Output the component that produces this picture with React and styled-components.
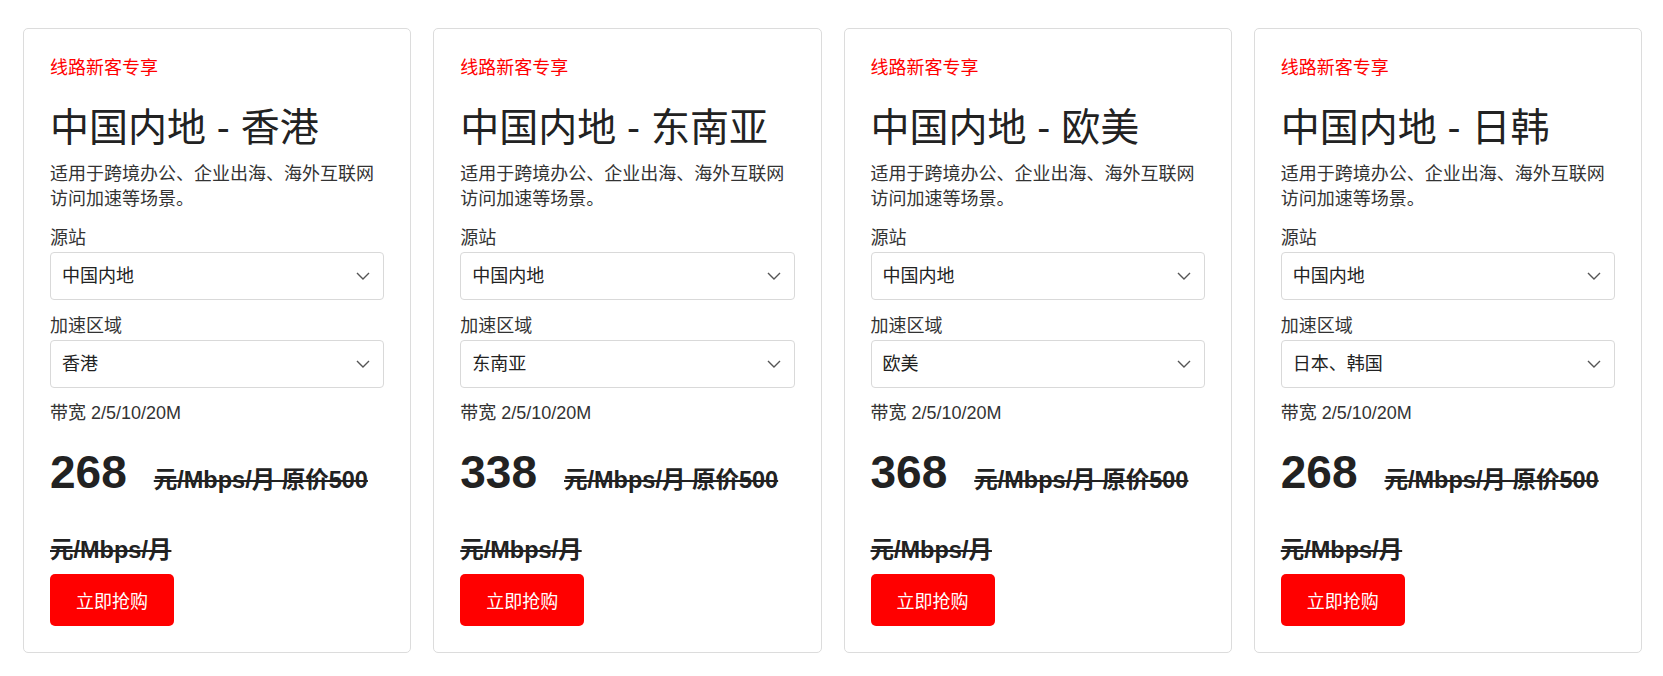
import React from "react";
import styled, { createGlobalStyle } from "styled-components";

const plans = [
  { region: "香港", area: "香港", price: 268 },
  { region: "东南亚", area: "东南亚", price: 338 },
  { region: "欧美", area: "欧美", price: 368 },
  { region: "日韩", area: "日本、韩国", price: 268 },
];

export default function App() {
  return (
    <>
      <GlobalStyle />
      <StyledGrid>
        {plans.map(({ region, area, price }) => (
          <StyledCard key={region}>
            <StyledTag>线路新客专享</StyledTag>
            <StyledTitle>中国内地 - {region}</StyledTitle>
            <StyledDesc>适用于跨境办公、企业出海、海外互联网访问加速等场景。</StyledDesc>
            <Field label="源站" value="中国内地" />
            <Field label="加速区域" value={area} />
            <StyledBandwidth>带宽 2/5/10/20M</StyledBandwidth>
            <StyledPrice>
              {price}
              <del>元/Mbps/月 原价500 元/Mbps/月</del>
            </StyledPrice>
            <StyledButton type="button">立即抢购</StyledButton>
          </StyledCard>
        ))}
      </StyledGrid>
    </>
  );
}

function Field({ label, value }) {
  return (
    <StyledField>
      <span>{label}</span>
      <StyledSelect>
        {value}
        <svg width="14" height="8" viewBox="0 0 14 8" aria-hidden="true">
          <polyline
            points="1,1 7,7 13,1"
            fill="none"
            stroke="#555"
            strokeWidth="1.4"
          />
        </svg>
      </StyledSelect>
    </StyledField>
  );
}

const GlobalStyle = createGlobalStyle`
  body {
    margin: 0;
    background: #fff;
    font-family: "Liberation Sans", "Noto Sans CJK SC", sans-serif;
    color: #333;
  }
`;

const StyledGrid = styled.main`
  display: grid;
  grid-template-columns: repeat(4, 1fr);
  gap: 22px;
  padding: 28px 21px 24px 23px;
  align-items: start;
`;

const StyledCard = styled.section`
  display: flex;
  flex-direction: column;
  align-items: flex-start;
  border: 1px solid #dcdcdc;
  border-radius: 5px;
  padding: 26px 26px 26px;
`;

const StyledTag = styled.p`
  margin: 0;
  font-size: 18px;
  line-height: 27px;
  color: #ff0000;
`;

const StyledTitle = styled.h2`
  margin: 22px 0 0;
  font-size: 39px;
  line-height: 48px;
  font-weight: 400;
  color: #222;
`;

const StyledDesc = styled.p`
  margin: 10px 0 0;
  font-size: 18px;
  line-height: 25px;
  color: #333;
`;

const StyledField = styled.label`
  display: flex;
  flex-direction: column;
  align-self: stretch;
  margin-top: 13px;
  font-size: 18px;
  line-height: 27px;
  color: #333;
`;

const StyledSelect = styled.div`
  display: flex;
  align-items: center;
  justify-content: space-between;
  height: 48px;
  box-sizing: border-box;
  padding: 0 13px 0 11px;
  border: 1px solid #d9d9d9;
  border-radius: 4px;
  color: #222;
  font-size: 18px;
`;

const StyledBandwidth = styled.p`
  margin: 13px 0 0;
  font-size: 18px;
  line-height: 25px;
  color: #333;
`;

const StyledPrice = styled.p`
  margin: 11px 0 -3px;
  font-size: 46px;
  line-height: 70px;
  font-weight: 700;
  color: #222;

  del {
    margin-left: 27px;
    font-size: 23.5px;
    line-height: 24px;
  }
`;

const StyledButton = styled.button`
  width: 124px;
  height: 52px;
  border: none;
  border-radius: 5px;
  background: #ff0000;
  color: #fff;
  font-family: inherit;
  font-size: 18px;
  cursor: pointer;
`;
